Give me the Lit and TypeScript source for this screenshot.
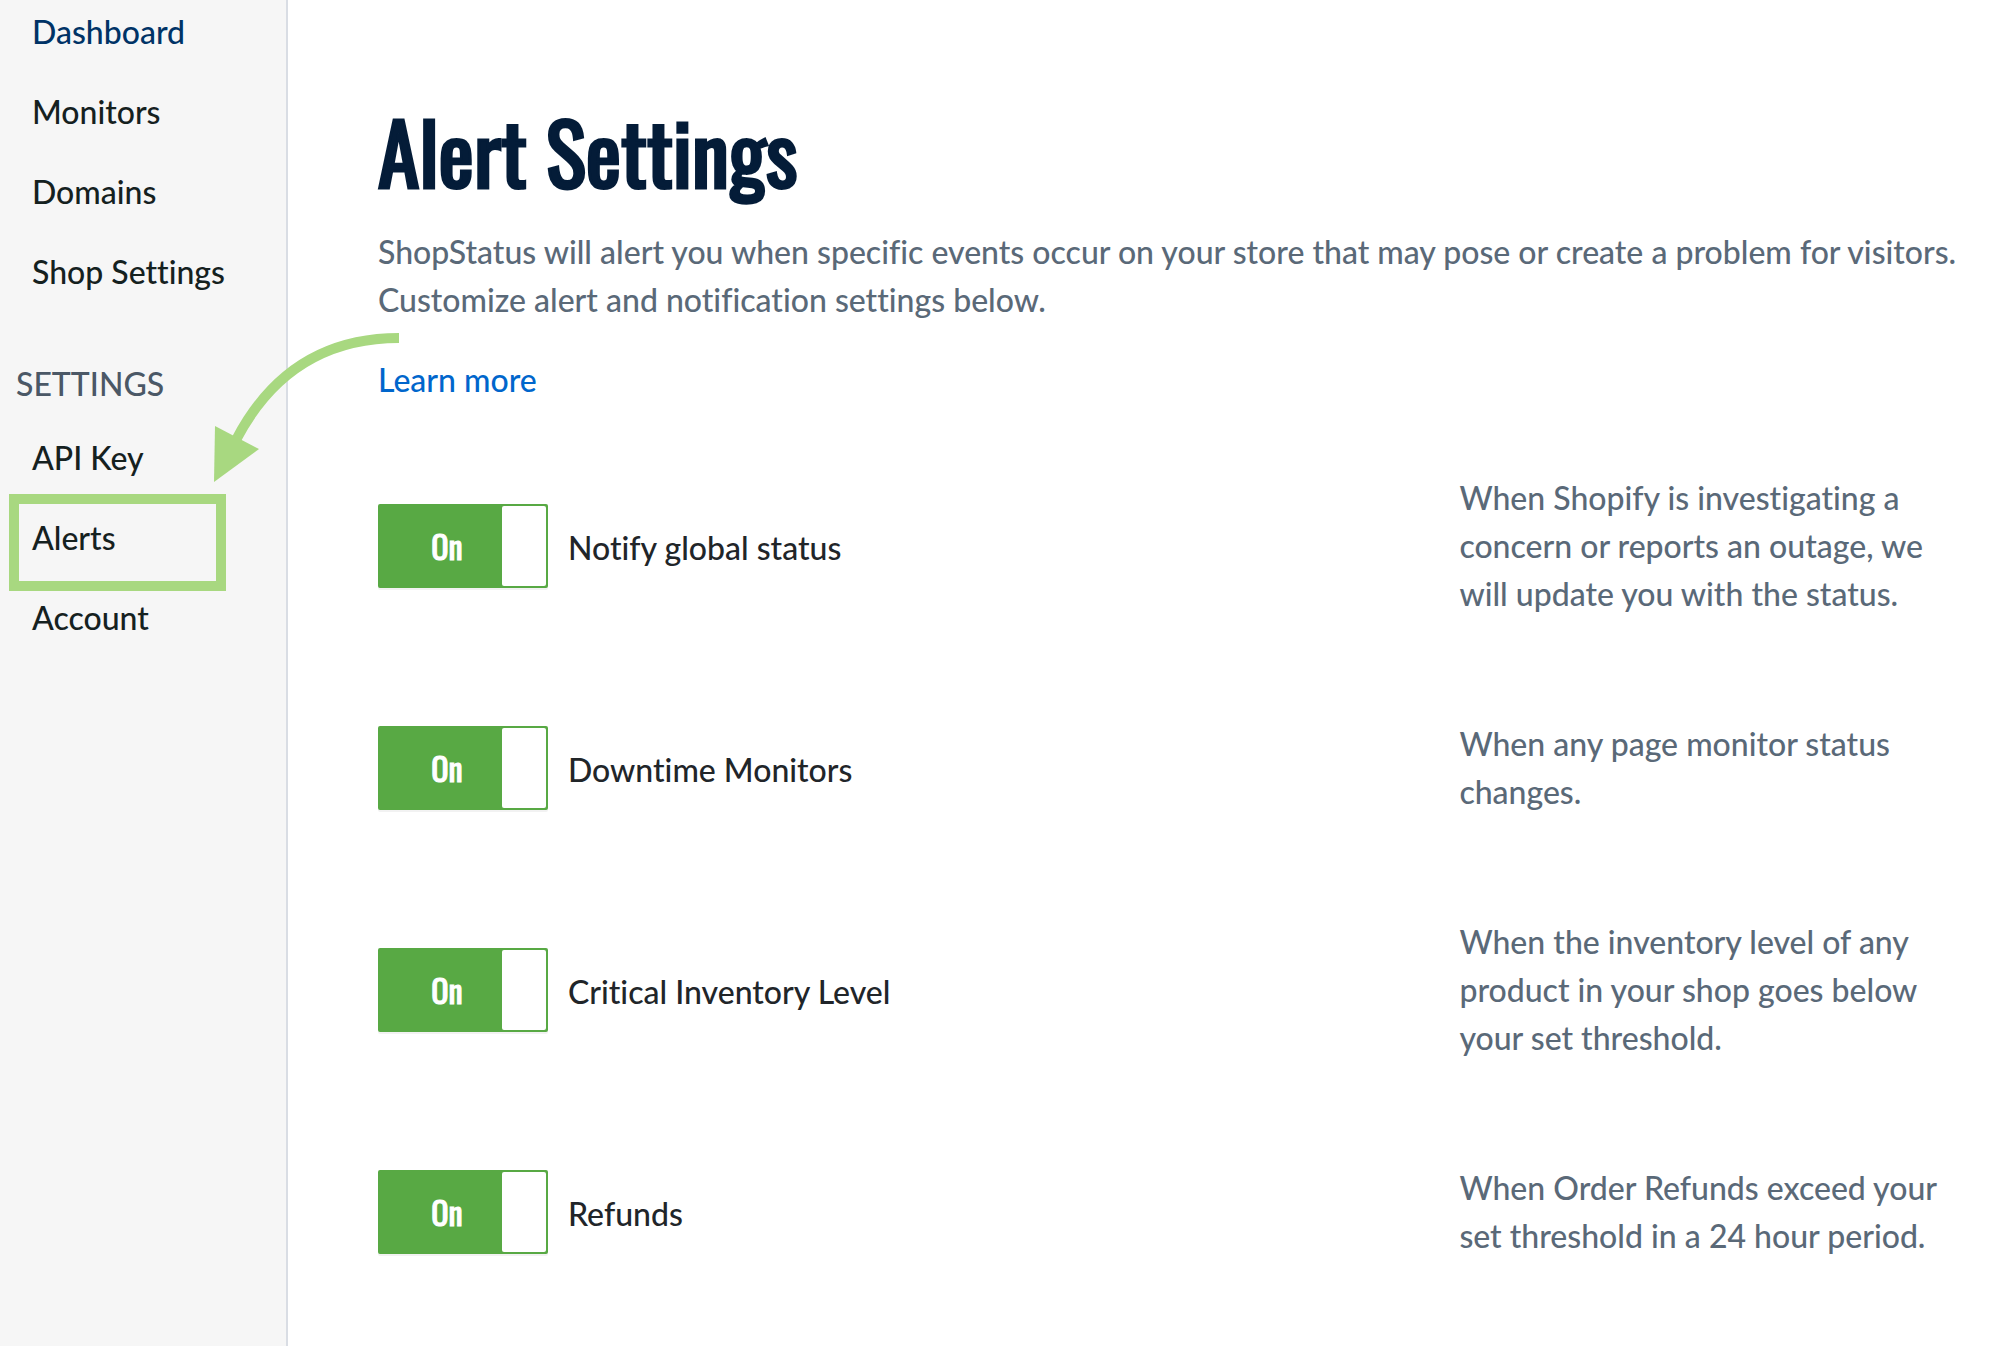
import { LitElement, html, css } from "lit";
import { customElement, state } from "lit/decorators.js";

interface AlertSetting {
  id: string;
  label: string;
  description: string;
  on: boolean;
}

@customElement("settings-sidebar")
class SettingsSidebar extends LitElement {
  static styles = css`
    :host {
      display: block;
      box-sizing: border-box;
      padding: 8px 16px;
      background: #f6f6f6;
      border-right: 2px solid #d9dde4;
    }
    .list {
      display: flex;
      flex-direction: column;
      gap: 32px;
      margin: 0;
      padding: 0 0 0 16px;
      list-style: none;
    }
    .item {
      position: relative;
    }
    .link {
      display: block;
      color: #15211f;
      text-decoration: none;
    }
    .link.current {
      color: #003366;
    }
    .heading {
      margin: 64px 0 26px;
      font-size: 32px;
      font-weight: 500;
      color: #4b5866;
    }
    .highlight {
      position: absolute;
      inset: -20px 44px -29px -23px;
      border: 10px solid #a8d880;
      pointer-events: none;
    }
    .arrow {
      position: absolute;
      left: 182px;
      top: -182px;
      width: 186px;
      height: 151px;
      pointer-events: none;
    }
  `;

  render() {
    return html`
      <nav aria-label="Main">
        <ul class="list">
          <li class="item"><a class="link current" href="#dashboard">Dashboard</a></li>
          <li class="item"><a class="link" href="#monitors">Monitors</a></li>
          <li class="item"><a class="link" href="#domains">Domains</a></li>
          <li class="item"><a class="link" href="#shop">Shop Settings</a></li>
        </ul>
        <h2 class="heading">SETTINGS</h2>
        <ul class="list">
          <li class="item"><a class="link" href="#api">API Key</a></li>
          <li class="item">
            <a class="link" href="#alerts">Alerts</a>
            <span class="highlight"></span>
            <svg class="arrow" viewBox="214 332 186 151" aria-hidden="true">
              <path d="M399 338Q289 338 236 440" fill="none" stroke="#a8d880" stroke-width="10" />
              <path d="M215 426L259 449L214 482Z" fill="#a8d880" />
            </svg>
          </li>
          <li class="item"><a class="link" href="#account">Account</a></li>
        </ul>
      </nav>
    `;
  }
}

@customElement("app-root")
class AppRoot extends LitElement {
  @state() private settings: AlertSetting[] = [
    {
      id: "global",
      label: "Notify global status",
      description:
        "When Shopify is investigating a concern or reports an outage, we will update you with the status.",
      on: true,
    },
    {
      id: "downtime",
      label: "Downtime Monitors",
      description: "When any page monitor status changes.",
      on: true,
    },
    {
      id: "inventory",
      label: "Critical Inventory Level",
      description: "When the inventory level of any product in your shop goes below your set threshold.",
      on: true,
    },
    {
      id: "refunds",
      label: "Refunds",
      description: "When Order Refunds exceed your set threshold in a 24 hour period.",
      on: true,
    },
  ];

  static styles = css`
    :host {
      display: grid;
      grid-template-columns: 288px 1fr;
      min-height: 100vh;
      background: #fff;
      font-family: Lato, "Liberation Sans", sans-serif;
      font-size: 32px;
      font-weight: 500;
      font-variant-ligatures: none;
      line-height: 48px;
      color: #212529;
    }
    .sidebar {
      position: relative;
      z-index: 1;
    }
    .main {
      padding: 96px 50px 0 90px;
    }
    .title {
      margin: 0 0 24px;
      font-family: Oswald, "Liberation Sans Narrow", sans-serif;
      font-size: 84px;
      line-height: 108px;
      font-weight: 400;
      color: #041c38;
      -webkit-text-stroke: 3px #041c38;
    }
    .intro {
      margin: 0 0 32px;
      color: #5a6978;
    }
    .more {
      margin: 0 0 31px;
    }
    .more-link {
      color: #0066cc;
      text-decoration: none;
    }
    .settings {
      padding-right: 24px;
    }
    .row {
      display: grid;
      grid-template-columns: 9fr 4fr;
      align-items: center;
      min-height: 222px;
    }
    .control {
      display: flex;
      align-items: center;
      gap: 20px;
      justify-self: start;
      cursor: pointer;
    }
    .switch {
      display: flex;
      box-sizing: border-box;
      position: relative;
      width: 170px;
      height: 84px;
      border: 2px solid #58a944;
      border-radius: 2px;
      background: #58a944;
      box-shadow: 0 2px 0 rgba(0, 0, 0, 0.05);
    }
    .input {
      position: absolute;
      inset: 0;
      width: 100%;
      height: 100%;
      margin: 0;
      opacity: 0;
      cursor: pointer;
    }
    .state {
      flex: 1;
      align-self: center;
      padding-left: 12px;
      text-align: center;
      font-family: Oswald, "Liberation Sans Narrow", sans-serif;
      font-size: 32px;
      font-weight: 400;
      color: #fff;
      -webkit-text-stroke: 1px #fff;
    }
    .knob {
      width: 44px;
      border-radius: 2px;
      background: #fff;
    }
    .switch.off {
      flex-direction: row-reverse;
      border-color: #8a94a0;
      background: #8a94a0;
    }
    .label {
      padding-top: 4px;
    }
    .description {
      margin: 0;
      color: #5a6978;
    }
  `;

  private toggle(id: string) {
    this.settings = this.settings.map((s) => (s.id === id ? { ...s, on: !s.on } : s));
  }

  render() {
    return html`
      <settings-sidebar class="sidebar"></settings-sidebar>
      <main class="main">
        <h1 class="title">Alert Settings</h1>
        <p class="intro">
          ShopStatus will alert you when specific events occur on your store that may pose or create a
          problem for visitors. Customize alert and notification settings below.
        </p>
        <p class="more"><a class="more-link" href="#learn">Learn more</a></p>
        <div class="settings">
          ${this.settings.map(
            (s) => html`
              <section class="row">
                <label class="control" for=${s.id}>
                  <span class="switch ${s.on ? "" : "off"}">
                    <input
                      class="input"
                      type="checkbox"
                      role="switch"
                      id=${s.id}
                      .checked=${s.on}
                      @change=${() => this.toggle(s.id)}
                    />
                    <span class="state">${s.on ? "On" : "Off"}</span>
                    <span class="knob"></span>
                  </span>
                  <span class="label">${s.label}</span>
                </label>
                <p class="description">${s.description}</p>
              </section>
            `
          )}
        </div>
      </main>
    `;
  }
}
